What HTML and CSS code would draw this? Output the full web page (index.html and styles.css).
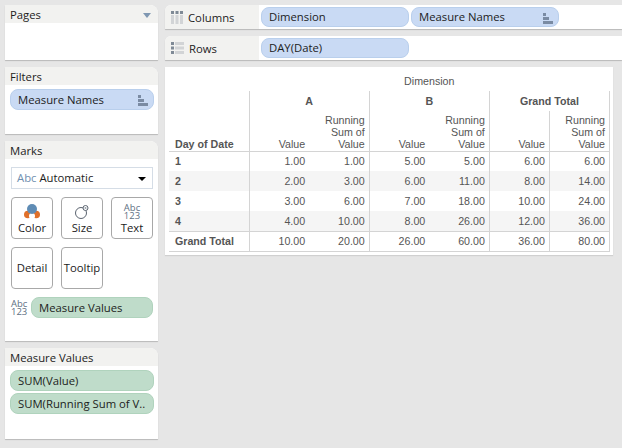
FILE: index.html

```html
<!DOCTYPE html>
<html lang="en">
<head>
  <meta charset="UTF-8" />
  <title>Running Sum Worksheet</title>
  <link rel="stylesheet" href="styles.css">
</head>
<body>
  <div class="sidebar">
    <div class="card pages-card">
      <div class="card-title">Pages <span class="title-arrow"></span></div>
    </div>

    <div class="card filters-card">
      <div class="card-title">Filters</div>
      <div class="pill-list">
        <div class="pill blue">Measure Names
          <svg class="sort-icon" width="10" height="11" viewBox="0 0 10 11"><path d="M0 0h3v3H0zM0 4h6v3H0zM0 8h10v3H0z" fill="#7a8ba3"/></svg>
        </div>
      </div>
    </div>

    <div class="card marks-card">
      <div class="card-title">Marks</div>
      <div class="marks-body">
        <div class="mark-select">
          <span class="abc-inline">Abc</span> Automatic
          <span class="select-arrow"></span>
        </div>
        <div class="mark-grid">
          <div class="mark-btn">
            <svg width="16" height="15" viewBox="0 0 16 15">
              <circle cx="3.8" cy="10.500" r="3.8" fill="#e0702a"/>
              <circle cx="12.2" cy="10.500" r="3.8" fill="#e0702a"/>
              <circle cx="8" cy="12" r="3" fill="#fff"/>
              <circle cx="8" cy="5" r="5" fill="#5f8cb5"/>
            </svg>
            <span>Color</span>
          </div>
          <div class="mark-btn">
            <svg width="16" height="15" viewBox="0 0 16 15" fill="none" stroke="#5b6470">
              <circle cx="7" cy="9" r="5.500"/>
              <circle cx="11.500" cy="4" r="2.500" fill="#fff"/>
              <circle cx="11.500" cy="4" r="1" fill="#9aa3ad" stroke="none"/>
            </svg>
            <span>Size</span>
          </div>
          <div class="mark-btn">
            <div class="abc-stack">Abc<br>123</div>
            <span>Text</span>
          </div>
          <div class="mark-btn only-label">Detail</div>
          <div class="mark-btn only-label">Tooltip</div>
        </div>
        <div class="mark-field">
          <div class="abc-stack field-abc">Abc<br>123</div>
          <div class="pill green field-pill">Measure Values</div>
        </div>
      </div>
    </div>

    <div class="card values-card">
      <div class="card-title">Measure Values</div>
      <div class="pill-list">
        <div class="pill green">SUM(Value)</div>
        <div class="pill green">SUM(Running Sum of V..</div>
      </div>
    </div>
  </div>

  <div class="main">
    <div class="shelf">
      <div class="shelf-label">
        <svg width="12" height="13" viewBox="0 0 12 13">
          <path d="M0 0h3v3H0zM4.500 0h3v3h-3zM9 0h3v3H9z" fill="#7f8a96"/>
          <path d="M0 4h3v9H0zM4.500 4h3v9h-3zM9 4h3v9H9z" fill="#d2d4d6"/>
        </svg>
        Columns
      </div>
      <div class="shelf-pills">
        <div class="pill blue shelf-pill">Dimension</div>
        <div class="pill blue shelf-pill">Measure Names
          <svg class="sort-icon" width="10" height="11" viewBox="0 0 10 11"><path d="M0 0h3v3H0zM0 4h6v3H0zM0 8h10v3H0z" fill="#7a8ba3"/></svg>
        </div>
      </div>
    </div>
    <div class="shelf">
      <div class="shelf-label">
        <svg width="13" height="12" viewBox="0 0 13 12">
          <path d="M0 0h3v3H0zM0 4.500h3v3H0zM0 9h3v3H0z" fill="#7f8a96"/>
          <path d="M4 0h9v3H4zM4 4.500h9v3H4zM4 9h9v3H4z" fill="#d2d4d6"/>
        </svg>
        Rows
      </div>
      <div class="shelf-pills">
        <div class="pill blue shelf-pill">DAY(Date)</div>
      </div>
    </div>

    <div class="view">
      <table class="crosstab">
        <colgroup>
          <col class="col-head">
          <col class="col-num"><col class="col-num"><col class="col-num">
          <col class="col-num"><col class="col-num"><col class="col-num">
        </colgroup>
        <thead>
          <tr class="row-title">
            <th></th>
            <th colspan="6" class="dim-title">Dimension</th>
          </tr>
          <tr class="row-group">
            <th></th>
            <th colspan="2" class="group line-left">A</th>
            <th colspan="2" class="group line-left">B</th>
            <th colspan="2" class="group line-left line-right">Grand Total</th>
          </tr>
          <tr class="row-measure">
            <th class="row-name">Day of Date</th>
            <th class="line-left">Value</th>
            <th>Running<br>Sum of<br>Value</th>
            <th class="line-left">Value</th>
            <th>Running<br>Sum of<br>Value</th>
            <th class="line-left">Value</th>
            <th class="line-left line-right">Running<br>Sum of<br>Value</th>
          </tr>
        </thead>
        <tbody>
          <tr>
            <th class="row-name">1</th>
            <td class="line-left">1.00</td><td>1.00</td>
            <td class="line-left">5.00</td><td>5.00</td>
            <td class="line-left">6.00</td><td class="line-left line-right">6.00</td>
          </tr>
          <tr class="band">
            <th class="row-name">2</th>
            <td class="line-left">2.00</td><td>3.00</td>
            <td class="line-left">6.00</td><td>11.00</td>
            <td class="line-left">8.00</td><td class="line-left line-right">14.00</td>
          </tr>
          <tr>
            <th class="row-name">3</th>
            <td class="line-left">3.00</td><td>6.00</td>
            <td class="line-left">7.00</td><td>18.00</td>
            <td class="line-left">10.00</td><td class="line-left line-right">24.00</td>
          </tr>
          <tr class="band">
            <th class="row-name">4</th>
            <td class="line-left">4.00</td><td>10.00</td>
            <td class="line-left">8.00</td><td>26.00</td>
            <td class="line-left">12.00</td><td class="line-left line-right">36.00</td>
          </tr>
          <tr class="total">
            <th class="row-name">Grand Total</th>
            <td class="line-left">10.00</td><td>20.00</td>
            <td class="line-left">26.00</td><td>60.00</td>
            <td class="line-left">36.00</td><td class="line-left line-right">80.00</td>
          </tr>
        </tbody>
      </table>
    </div>
  </div>
</body>
</html>
```

FILE: styles.css

```css
* {
  box-sizing: border-box;
}

body {
  margin: 0;
  width: 622px;
  height: 448px;
  overflow: hidden;
  display: flex;
  background: #e6e6e6;
  font-family: "Open Sans", sans-serif;
  font-size: 11.3px;
  color: #1c1c1c;
}

.sidebar {
  width: 153px;
  margin: 5px 0 0 5px;
  display: flex;
  flex-direction: column;
  gap: 7px;
}

.card {
  background: #fff;
  border-radius: 0 8px 0 0;
  box-shadow: 0 1px 1px #b8b8b8;
}

.pages-card { height: 55px; }
.filters-card { height: 67px; }
.marks-card { height: 200px; }
.values-card { height: 91px; }

.card-title {
  position: relative;
  height: 18px;
  padding: 1px 0 0 5px;
  line-height: 17px;
  background: #f2f2f0;
  border-radius: 0 8px 0 0;
}

.title-arrow {
  position: absolute;
  right: 7px;
  top: 8px;
  border: 4px solid transparent;
  border-top: 5px solid #7f97b2;
  border-bottom: 0;
}

.pill {
  height: 21px;
  line-height: 19px;
  padding-left: 7px;
  position: relative;
  border-radius: 8px;
  white-space: nowrap;
  overflow: hidden;
}

.blue {
  background: #c9daf4;
  border: 1px solid #b9cfec;
}

.green {
  background: #bfdcca;
  border: 1px solid #b0d3bd;
}

.sort-icon {
  position: absolute;
  right: 5px;
  top: 5px;
}

.pill-list {
  padding: 4px 4px 0 5px;
  display: flex;
  flex-direction: column;
  gap: 2px;
}

.marks-body {
  padding: 8px 5px 0 6px;
}

.mark-select {
  position: relative;
  height: 22px;
  line-height: 20px;
  padding-left: 5px;
  border: 1px solid #d5dde6;
}

.abc-inline {
  color: #6f8fb0;
}

.select-arrow {
  position: absolute;
  right: 6px;
  top: 9px;
  border: 4px solid transparent;
  border-top: 4px solid #000;
  border-bottom: 0;
}

.mark-grid {
  margin-top: 8px;
  display: grid;
  grid-template-columns: repeat(3, 42px);
  grid-auto-rows: 42px;
  gap: 8px;
}

.mark-btn {
  border: 1px solid #a8a8a8;
  border-radius: 4px;
  display: flex;
  flex-direction: column;
  align-items: center;
  justify-content: flex-end;
  line-height: 16px;
  padding-bottom: 2px;
}

.mark-btn svg {
  margin-bottom: 1px;
}

.only-label {
  justify-content: center;
  padding-bottom: 0;
}

.abc-stack {
  text-align: center;
  font-size: 9.5px;
  line-height: 8px;
  color: #5e6f82;
}

.mark-field {
  margin-top: 8px;
  display: flex;
  align-items: center;
  gap: 4px;
}

.field-abc {
  width: 16px;
  flex: none;
}

.field-pill {
  width: 122px;
  flex: none;
}

.main {
  flex: 1;
  margin: 5px 0 0 7px;
  display: flex;
  flex-direction: column;
  gap: 7px;
}

.shelf {
  height: 24px;
  display: flex;
  background: #fff;
  border-radius: 6px 0 0 0;
  box-shadow: 0 1px 1px #b8b8b8;
}

.shelf-label {
  width: 94px;
  display: flex;
  align-items: center;
  gap: 5px;
  padding-left: 6px;
  background: #f2f2f0;
  border-radius: 6px 0 0 0;
}

.shelf-pills {
  display: flex;
  gap: 2px;
  padding: 2px 0 0 2px;
}

.shelf-pill {
  width: 148px;
  height: 20px;
  line-height: 18px;
}

.view {
  width: 448px;
  height: 188px;
  padding: 4px 0 0 4px;
  background: #fff;
  box-shadow: 0 1px 1px #d0d0d0;
}

.crosstab {
  table-layout: fixed;
  width: 441px;
  border-collapse: collapse;
  font-family: "Liberation Sans", Arial, sans-serif;
  font-size: 10.67px;
  color: #555;
}

.col-head { width: 80px; }
.col-num { width: 60px; }

.crosstab th,
.crosstab td {
  padding: 0 4px 0 0;
  text-align: right;
  font-weight: normal;
  vertical-align: middle;
}

.row-title { height: 20px; }
.row-group { height: 20px; }
.row-measure { height: 40px; }
.crosstab tbody tr { height: 20px; }

.crosstab .dim-title,
.crosstab .group {
  text-align: center;
  padding: 0;
}

.crosstab .group {
  font-weight: bold;
}

.row-measure th {
  vertical-align: bottom;
  line-height: 12px;
  padding-bottom: 1px;
  border-bottom: 1px solid #d4d4d4;
}

.crosstab .row-name {
  text-align: left;
  padding-left: 6px;
  font-weight: bold;
}

.crosstab .line-left { border-left: 1px solid #d4d4d4; }
.crosstab .line-right { border-right: 1px solid #d4d4d4; }

.band { background: #f5f5f5; }

.total th,
.total td {
  border-top: 1px solid #d4d4d4;
  border-bottom: 1px solid #d4d4d4;
}
```
